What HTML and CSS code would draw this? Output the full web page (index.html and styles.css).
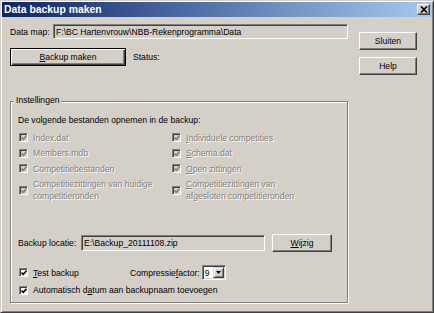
FILE: index.html
```html
<!DOCTYPE html>
<html lang="nl">
<head>
<meta charset="utf-8">
<title>Data backup maken</title>
<link rel="stylesheet" href="styles.css">
</head>
<body>
<div class="window">
  <div class="titlebar">
    <span class="title">Data backup maken</span>
    <span class="close"><svg width="8" height="7" viewBox="0 0 8 7"><path d="M1 0.5 L7 6.5 M7 0.5 L1 6.5" stroke="#000" stroke-width="1.6" fill="none"/></svg></span>
  </div>
  <div class="client">
    <div class="main">
      <div class="row-map">
        <span class="lbl-map">Data map:</span>
        <div class="field field-map">F:\BC Hartenvrouw\NBB-Rekenprogramma\Data</div>
      </div>
      <div class="row-backup">
        <button class="btn btn-default btn-backup"><u>B</u>ackup maken</button>
        <span class="status">Status:</span>
      </div>
      <div class="group">
        <span class="group-title">Instellingen</span>
        <div class="intro">De volgende bestanden opnemen in de backup:</div>
        <div class="checks">
          <div class="chk dis"><span class="box box-dis"><svg class="tick" viewBox="0 0 7 7"><path d="M0.6 3 L2.6 5 L6.4 1"/></svg></span><span>Index.dat</span></div>
          <div class="chk dis"><span class="box box-dis"><svg class="tick" viewBox="0 0 7 7"><path d="M0.6 3 L2.6 5 L6.4 1"/></svg></span><span><u>I</u>ndividuele competities</span></div>
          <div class="chk dis"><span class="box box-dis"><svg class="tick" viewBox="0 0 7 7"><path d="M0.6 3 L2.6 5 L6.4 1"/></svg></span><span>Members.mdb</span></div>
          <div class="chk dis"><span class="box box-dis"><svg class="tick" viewBox="0 0 7 7"><path d="M0.6 3 L2.6 5 L6.4 1"/></svg></span><span><u>S</u>chema.dat</span></div>
          <div class="chk dis"><span class="box box-dis"><svg class="tick" viewBox="0 0 7 7"><path d="M0.6 3 L2.6 5 L6.4 1"/></svg></span><span>Competitiebestanden</span></div>
          <div class="chk dis"><span class="box box-dis"><svg class="tick" viewBox="0 0 7 7"><path d="M0.6 3 L2.6 5 L6.4 1"/></svg></span><span><u>O</u>pen zittingen</span></div>
          <div class="chk dis"><span class="box box-dis"><svg class="tick" viewBox="0 0 7 7"><path d="M0.6 3 L2.6 5 L6.4 1"/></svg></span><span>Competitiezittingen van huidige<br>competitieronden</span></div>
          <div class="chk dis"><span class="box box-dis"><svg class="tick" viewBox="0 0 7 7"><path d="M0.6 3 L2.6 5 L6.4 1"/></svg></span><span><u>C</u>ompetitiezittingen van<br>afgesloten competitieronden</span></div>
        </div>
        <div class="row-loc">
          <span class="lbl-loc">Backup locatie:</span>
          <div class="field field-loc">E:\Backup_20111108.zip</div>
          <button class="btn btn-wijzig"><u>W</u>ijzig</button>
        </div>
        <div class="row-test">
          <div class="chk chk-test"><span class="box"><svg class="tick" viewBox="0 0 7 7"><path d="M0.6 3 L2.6 5 L6.4 1"/></svg></span><span><u>T</u>est backup</span></div>
          <span class="lbl-comp">Compressie<u>f</u>actor:</span>
          <div class="combo">
            <span class="combo-val">9</span>
            <span class="combo-btn"><svg width="5" height="3" viewBox="0 0 5 3"><path d="M0 0 H5 L2.5 3 Z" fill="#000"/></svg></span>
          </div>
        </div>
        <div class="row-auto">
          <div class="chk"><span class="box"><svg class="tick" viewBox="0 0 7 7"><path d="M0.6 3 L2.6 5 L6.4 1"/></svg></span><span>Automatisch d<u>a</u>tum aan backupnaam toevoegen</span></div>
        </div>
      </div>
    </div>
    <div class="side">
      <button class="btn">Sluiten</button>
      <button class="btn">Help</button>
    </div>
  </div>
</div>
</body>
</html>
```
FILE: styles.css
```css
* { box-sizing: border-box; }
html, body { margin: 0; padding: 0; }
body {
  width: 434px;
  height: 313px;
  overflow: hidden;
  background: #d4d0c8;
  font-family: "Liberation Sans", Arial, sans-serif;
  font-size: 8.6px;
  line-height: 12px;
  color: #000;
}
.window {
  width: 434px;
  height: 313px;
  border: 1px solid;
  border-color: #d4d0c8 #404040 #404040 #d4d0c8;
  box-shadow: inset 1px 1px #fff, inset -1px -1px #808080;
  padding: 1px;
  display: flex;
  flex-direction: column;
}
.titlebar {
  height: 15px;
  flex: none;
  background: linear-gradient(to right, #0a246a, #a6caf0);
  display: flex;
  align-items: center;
  justify-content: space-between;
  padding: 0 2px 0 2px;
}
.title {
  color: #fff;
  font-weight: bold;
  font-size: 10.4px;
}
.close {
  width: 13px;
  height: 11px;
  background: #d4d0c8;
  border: 1px solid;
  border-color: #fff #404040 #404040 #fff;
  box-shadow: inset -1px -1px #808080;
  display: flex;
  align-items: center;
  justify-content: center;
}
.client {
  display: flex;
  gap: 11px;
  padding: 7px 0 0 8px;
  flex: 1;
}
.main {
  width: 338px;
  display: flex;
  flex-direction: column;
}
.row-map {
  display: flex;
  align-items: center;
  height: 15px;
}
.lbl-map { width: 43px; flex: none; }
.field {
  border: 1px solid;
  border-color: #808080 #fff #fff #808080;
  box-shadow: inset 1px 1px #404040, inset -1px -1px #d4d0c8;
  padding: 0 2px;
  height: 15px;
  display: flex;
  align-items: center;
  white-space: nowrap;
  background: #d4d0c8;
}
.field-map { flex: 1; }
.row-backup {
  display: flex;
  align-items: center;
  gap: 7px;
  margin-top: 9px;
}
.btn {
  font: inherit;
  color: #000;
  height: 18px;
  padding: 0;
  margin: 0;
  background: #d4d0c8;
  border: 1px solid;
  border-color: #fff #404040 #404040 #fff;
  box-shadow: inset -1px -1px #808080;
  display: flex;
  align-items: center;
  justify-content: center;
}
.btn-default {
  border-color: #000;
  box-shadow: inset 1px 1px #fff, inset -1px -1px #404040, inset -2px -2px #808080;
}
.btn-backup { width: 116px; }
.group {
  margin-top: 35px;
  height: 202px;
  border: 1px solid #808080;
  box-shadow: inset 1px 1px #fff, 1px 1px #fff;
  padding: 0 0 0 7px;
  display: flex;
  flex-direction: column;
  align-items: flex-start;
}
.group-title {
  margin: -8px 0 0 -4px;
  padding: 0 2px;
  background: #d4d0c8;
}
.intro { margin-top: 8px; }
.checks {
  margin-top: 5.5px;
  margin-left: 1px;
  display: grid;
  grid-template-columns: 153px 160px;
  row-gap: 3.5px;
}
.chk {
  display: flex;
  align-items: center;
  gap: 5px;
  white-space: nowrap;
}
.box {
  width: 9px;
  height: 9px;
  flex: none;
  background: #fff;
  border: 1px solid;
  border-color: #808080 #fff #fff #808080;
  box-shadow: inset 1px 1px #404040;
  display: flex;
  align-items: center;
  justify-content: center;
  padding: 1px 0 0 1px;
}
.box-dis { background: #d4d0c8; }
.tick { width: 6px; height: 6px; }
.tick path { fill: none; stroke: #000; stroke-width: 1.9; }
.box-dis .tick path { stroke: #808080; }
.dis {
  color: #808080;
  text-shadow: 1px 1px 0 #fff;
}
.row-loc {
  margin-top: 32px;
  display: flex;
  align-items: center;
  height: 18px;
}
.lbl-loc { width: 63px; flex: none; }
.field-loc { width: 184px; height: 16px; }
.btn-wijzig { width: 60px; margin-left: 7px; }
.row-test {
  margin-top: 13px;
  margin-left: 1px;
  display: flex;
  align-items: center;
  height: 15px;
}
.chk-test { width: 111px; }
.combo {
  width: 24px;
  height: 15px;
  margin-left: 2px;
  background: #fff;
  border: 1px solid;
  border-color: #808080 #fff #fff #808080;
  box-shadow: inset 1px 1px #404040, inset -1px -1px #d4d0c8;
  padding: 1px 1px 1px 2px;
  display: flex;
  align-items: center;
}
.combo-val { flex: 1; }
.combo-btn {
  width: 11px;
  height: 11px;
  background: #d4d0c8;
  border: 1px solid;
  border-color: #d4d0c8 #404040 #404040 #d4d0c8;
  box-shadow: inset 1px 1px #fff, inset -1px -1px #808080;
  display: flex;
  align-items: center;
  justify-content: center;
}
.row-auto {
  margin-top: 4px;
  margin-left: 1px;
}
.side {
  width: 58px;
  display: flex;
  flex-direction: column;
  gap: 7px;
  padding-top: 8px;
}
.side .btn { width: 58px; }
```
